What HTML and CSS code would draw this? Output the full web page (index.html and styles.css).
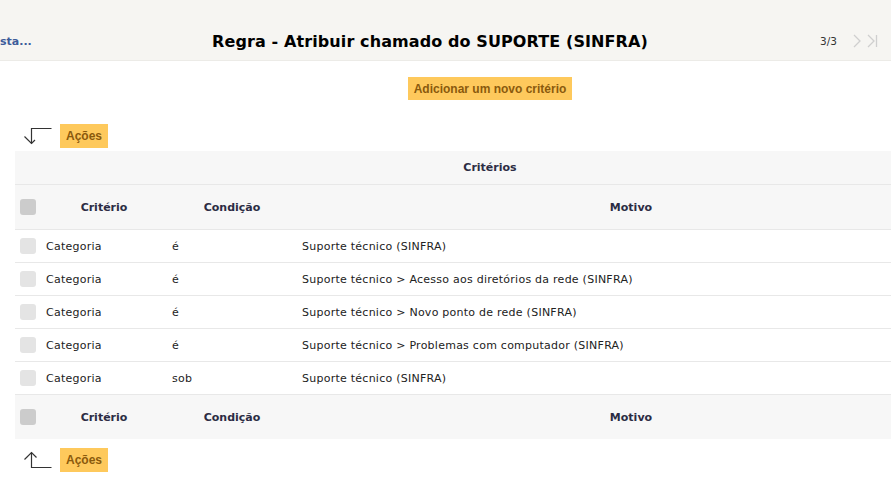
FILE: index.html
```html
<!DOCTYPE html>
<html lang="pt">
<head>
<meta charset="utf-8">
<title>Regra</title>
<link rel="stylesheet" href="styles.css">
</head>
<body>
<header class="topbar">
  <div class="top-left"><a class="back-link" href="#">sta...</a></div>
  <h1 class="title">Regra - Atribuir chamado do SUPORTE (SINFRA)</h1>
  <div class="top-right">
    <span class="pager">3/3</span>
    <svg class="nav-icon" width="10" height="14" viewBox="0 0 10 14"><polyline points="2,1 8,7 2,13" fill="none" stroke="#cfcfcf" stroke-width="1.3"/></svg>
    <svg class="nav-icon" width="12" height="14" viewBox="0 0 12 14"><polyline points="2,1 8,7 2,13" fill="none" stroke="#cfcfcf" stroke-width="1.3"/><line x1="10.5" y1="1" x2="10.5" y2="13" stroke="#cfcfcf" stroke-width="1.3"/></svg>
  </div>
</header>
<main class="content">
  <div class="add-row"><button class="btn">Adicionar um novo critério</button></div>
  <div class="actions-row top">
    <svg class="arrow" width="30" height="20" viewBox="0 0 30 20"><polyline points="29.5,2.5 9.5,2.5 9.5,17.5" fill="none" stroke="#333" stroke-width="1.2"/><polyline points="2.5,10.5 9.5,17.5 13,14" fill="none" stroke="#333" stroke-width="1.2"/></svg>
    <button class="btn small">Ações</button>
  </div>
  <table class="grid">
    <colgroup><col class="c-check"><col class="c-crit"><col class="c-cond"><col class="c-mot"></colgroup>
    <thead>
      <tr class="caption-row"><th colspan="4">Critérios</th></tr>
      <tr class="head-row"><th><span class="cb dark"></span></th><th>Critério</th><th>Condição</th><th>Motivo</th></tr>
    </thead>
    <tbody>
      <tr><td><span class="cb"></span></td><td>Categoria</td><td>é</td><td>Suporte técnico (SINFRA)</td></tr>
      <tr><td><span class="cb"></span></td><td>Categoria</td><td>é</td><td>Suporte técnico &gt; Acesso aos diretórios da rede (SINFRA)</td></tr>
      <tr><td><span class="cb"></span></td><td>Categoria</td><td>é</td><td>Suporte técnico &gt; Novo ponto de rede (SINFRA)</td></tr>
      <tr><td><span class="cb"></span></td><td>Categoria</td><td>é</td><td>Suporte técnico &gt; Problemas com computador (SINFRA)</td></tr>
      <tr><td><span class="cb"></span></td><td>Categoria</td><td>sob</td><td>Suporte técnico (SINFRA)</td></tr>
    </tbody>
    <tfoot>
      <tr class="head-row"><th><span class="cb dark"></span></th><th>Critério</th><th>Condição</th><th>Motivo</th></tr>
    </tfoot>
  </table>
  <div class="actions-row bottom">
    <svg class="arrow" width="30" height="20" viewBox="0 0 30 20"><polyline points="9.5,2.5 9.5,17.5 29.5,17.5" fill="none" stroke="#333" stroke-width="1.2"/><polyline points="2.5,9.5 9.5,2.5 14.5,7.5" fill="none" stroke="#333" stroke-width="1.2"/></svg>
    <button class="btn small">Ações</button>
  </div>
</main>
</body>
</html>
```
FILE: styles.css
```css
html, body {
  margin: 0;
  padding: 0;
  background: #fff;
  overflow: hidden;
  font-family: "DejaVu Sans", Verdana, sans-serif;
  font-size: 11px;
  color: #222;
}

.topbar {
  height: 61px;
  background: #f6f5f2;
  border-bottom: 1px solid #ecebe7;
  display: flex;
  align-items: center;
  padding-top: 22px;
  box-sizing: border-box;
}
.top-left { width: 40px; }
.back-link {
  font-weight: bold;
  font-size: 11px;
  color: #3d5c9a;
  text-decoration: none;
}
.title {
  flex: 1;
  margin: 0;
  text-align: center;
  font-size: 16px;
  font-weight: bold;
  color: #000;
  letter-spacing: 0.1px;
}
.top-right {
  width: 60px;
  display: flex;
  align-items: center;
  gap: 4px;
  padding-right: 11px;
  box-sizing: content-box;
}
.pager { font-size: 10.5px; color: #333; margin-right: 11px; }
.nav-icon { display: block; }

.content {
  width: 950px;
  margin-left: 15px;
}
.add-row {
  display: flex;
  justify-content: center;
  padding-top: 16px;
}
.btn {
  background: #fec95c;
  border: none;
  color: #8a5a0d;
  font-family: "Liberation Sans", Arial, sans-serif;
  font-weight: bold;
  font-size: 12px;
  height: 23px;
  padding: 0 6px;
  cursor: pointer;
}
.btn.small { height: 24px; padding: 0 6px; }

.actions-row {
  display: flex;
  align-items: center;
  padding-left: 7px;
  gap: 8px;
}
.actions-row.top { margin-top: 24px; }
.actions-row.bottom { margin-top: 9px; }
.arrow { display: block; }

.grid {
  width: 950px;
  border-collapse: collapse;
  margin-top: 3px;
  table-layout: fixed;
}
.c-check { width: 26px; }
.c-crit { width: 126px; }
.c-cond { width: 130px; }
.grid th {
  background: #f7f7f7;
  font-weight: bold;
  color: #2c2c44;
  font-size: 11px;
}
.grid th, .grid td {
  padding: 0 5px;
  border-bottom: 1px solid #e8e8e8;
}
.caption-row th { height: 33px; text-align: center; }
.head-row th { height: 44px; text-align: center; }
.head-row th:first-child { text-align: left; }
.grid td { height: 32px; text-align: left; color: #222; letter-spacing: 0.25px; }
.grid tfoot th { border-bottom: none; }
.cb {
  display: block;
  width: 16px;
  height: 16px;
  border-radius: 3px;
  background: #e4e4e4;
}
.cb.dark { background: #cccccc; }
```
